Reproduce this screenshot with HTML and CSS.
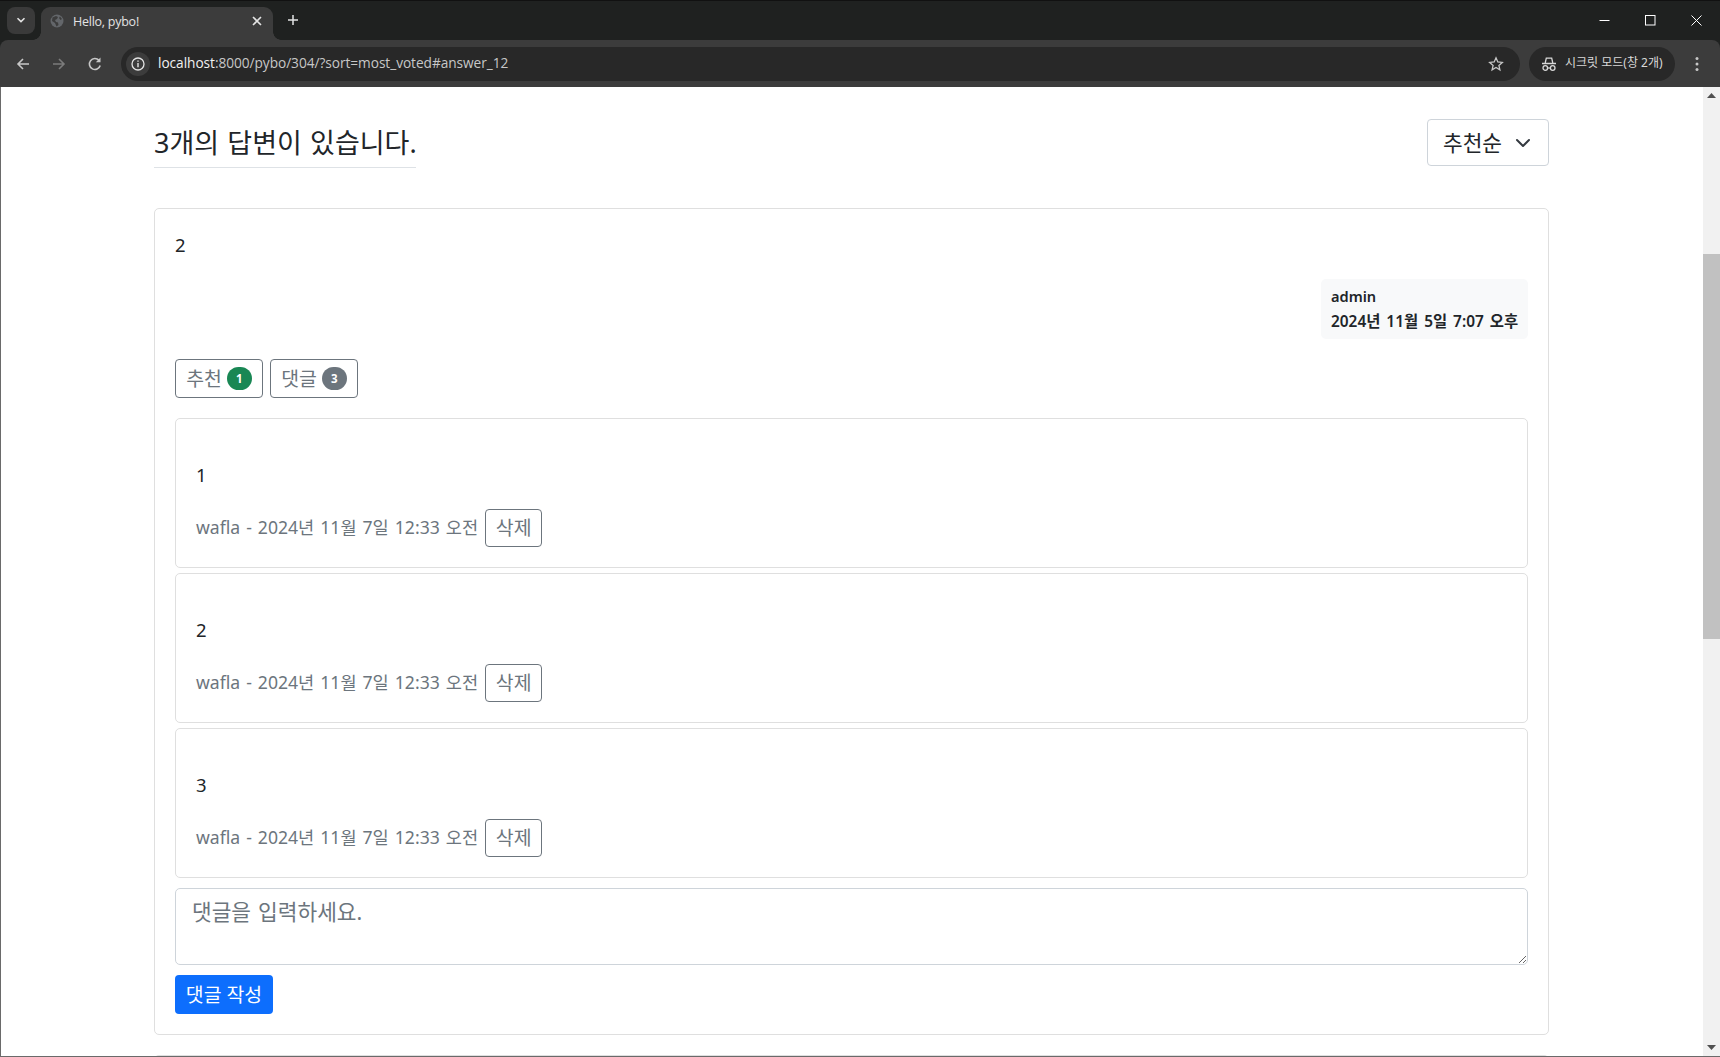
FILE: index.html
```html
<!DOCTYPE html>
<html lang="ko">
<head>
<meta charset="utf-8">
<title>Hello, pybo!</title>
<link rel="stylesheet" href="styles.css">
</head>
<body>
<div class="window">
  <div class="tabstrip">
    <div class="tab-menu"><svg width="10" height="6" viewBox="0 0 10 6"><path d="M1.5 1.2 5 4.6l3.5-3.4" fill="none" stroke="#e3e3e3" stroke-width="1.6"/></svg></div>
    <div class="tab">
      <svg class="favicon" width="14" height="14" viewBox="0 0 14 14"><circle cx="7" cy="7" r="6.5" fill="#63666a"/><path d="M2.5 3.5 6 2l2 1-1 2-2 1 1 2 2 .5.5 2.5-2 1.5L5 9 2 7zM10 2.5l2 2.5-1.500 1-1.500-2z" fill="#3c3c3c"/></svg>
      <span class="tab-title">Hello, pybo!</span>
      <svg class="tab-close" width="10" height="10" viewBox="0 0 10 10"><path d="M1 1l8 8M9 1l-8 8" stroke="#e3e3e3" stroke-width="1.600"/></svg>
    </div>
    <svg class="new-tab" width="12" height="12" viewBox="0 0 12 12"><path d="M6 1v10M1 6h10" stroke="#e3e3e3" stroke-width="1.500"/></svg>
    <div class="win-controls">
      <svg width="11" height="11" viewBox="0 0 11 11"><path d="M.5 5.500h10" stroke="#fff"/></svg>
      <svg width="11" height="11" viewBox="0 0 11 11"><rect x=".5" y=".5" width="9.500" height="9.500" fill="none" stroke="#fff"/></svg>
      <svg width="11" height="11" viewBox="0 0 11 11"><path d="M.5.5l10 10M10.500.5l-10 10" stroke="#fff"/></svg>
    </div>
  </div>
  <div class="toolbar">
    <svg class="nav" width="16" height="16" viewBox="0 0 16 16"><path d="M14 8H3M8 3 3 8l5 5" fill="none" stroke="#c7c7c7" stroke-width="1.600"/></svg>
    <svg class="nav" width="16" height="16" viewBox="0 0 16 16"><path d="M2 8h11M8 3l5 5-5 5" fill="none" stroke="#7b7b7b" stroke-width="1.600"/></svg>
    <svg class="nav" width="16" height="16" viewBox="0 0 16 16"><path d="M13.200 9.500A5.500 5.500 0 1 1 12 4.300" fill="none" stroke="#c7c7c7" stroke-width="1.600"/><path d="M13.500 1.500v4.700H8.800z" fill="#c7c7c7"/></svg>
    <div class="omnibox">
      <span class="site-info"><svg width="14" height="14" viewBox="0 0 14 14"><circle cx="7" cy="7" r="6" fill="none" stroke="#e3e3e3" stroke-width="1.300"/><path d="M7 6v4.200M7 3.600v1.200" stroke="#e3e3e3" stroke-width="1.400"/></svg></span>
      <span class="url"><span class="url-host">localhost</span>:8000/pybo/304/?sort=most_voted#answer_12</span>
      <svg class="star" width="16" height="16" viewBox="0 0 16 16"><path d="M8 1.800l1.800 4.200 4.500.4-3.400 3 1 4.400L8 11.500l-3.900 2.300 1-4.400-3.400-3 4.500-.4z" fill="none" stroke="#c7c7c7" stroke-width="1.300"/></svg>
    </div>
    <div class="incognito">
      <svg width="16" height="16" viewBox="0 0 16 16"><path d="M4.200 7 5.300 2.200h5.400L11.800 7" fill="none" stroke="#d8d8d8" stroke-width="1.300"/><path d="M1 7.500h14" stroke="#d8d8d8" stroke-width="1.500"/><circle cx="4.300" cy="12" r="2.300" fill="none" stroke="#d8d8d8" stroke-width="1.300"/><circle cx="11.700" cy="12" r="2.300" fill="none" stroke="#d8d8d8" stroke-width="1.300"/><path d="M6.600 12h2.800" stroke="#d8d8d8" stroke-width="1.200"/></svg>
      <span>시크릿 모드(창 2개)</span>
    </div>
    <svg class="kebab" width="4" height="16" viewBox="0 0 4 16"><circle cx="2" cy="2.500" r="1.500" fill="#c7c7c7"/><circle cx="2" cy="8" r="1.500" fill="#c7c7c7"/><circle cx="2" cy="13.500" r="1.500" fill="#c7c7c7"/></svg>
  </div>
  <div class="viewport">
    <main class="page">
      <div class="answers-head">
        <h4 class="answers-title">3개의 답변이 있습니다.</h4>
        <div class="sort-select">추천순<svg width="16" height="16" viewBox="0 0 16 16"><path d="M2 5l6 6 6-6" fill="none" stroke="#343a40" stroke-width="2" stroke-linecap="round" stroke-linejoin="round"/></svg></div>
      </div>
      <section class="card">
        <div class="answer-text">2</div>
        <div class="author-row">
          <div class="author-badge">
            <div class="author-name">admin</div>
            <div class="author-date">2024년 11월 5일 7:07 오후</div>
          </div>
        </div>
        <div class="actions">
          <a class="btn btn-outline">추천 <span class="badge badge-green">1</span></a>
          <a class="btn btn-outline">댓글 <span class="badge badge-grey">3</span></a>
        </div>
        <div class="comment">
          <div class="comment-text">1</div>
          <div class="comment-meta"><span class="meta-label">wafla - 2024년 11월 7일 12:33 오전</span><a class="btn btn-outline btn-del">삭제</a></div>
        </div>
        <div class="comment">
          <div class="comment-text">2</div>
          <div class="comment-meta"><span class="meta-label">wafla - 2024년 11월 7일 12:33 오전</span><a class="btn btn-outline btn-del">삭제</a></div>
        </div>
        <div class="comment">
          <div class="comment-text">3</div>
          <div class="comment-meta"><span class="meta-label">wafla - 2024년 11월 7일 12:33 오전</span><a class="btn btn-outline btn-del">삭제</a></div>
        </div>
        <textarea class="comment-input" placeholder="댓글을 입력하세요."></textarea>
        <a class="btn btn-primary">댓글 작성</a>
      </section>
      <div class="next-card"></div>
    </main>
    <div class="scrollbar">
      <svg width="9" height="5" viewBox="0 0 9 5" class="sb-up"><path d="M4.500 0 9 5H0z" fill="#505050"/></svg>
      <div class="sb-track"><div class="sb-thumb"></div></div>
      <svg width="9" height="5" viewBox="0 0 9 5" class="sb-down"><path d="M0 0h9L4.500 5z" fill="#505050"/></svg>
    </div>
  </div>
</div>
</body>
</html>
```
FILE: styles.css
```css
* { box-sizing: border-box; }
html, body { margin: 0; height: 100%; overflow: hidden; }
body { font-family: "Noto Sans", "Noto Sans CJK KR", sans-serif; color: #212529; background: #fff; }
.window { height: 1057px; display: flex; flex-direction: column; overflow: hidden; background: #1f2120; }

.tabstrip { height: 40px; flex: none; background: #1f2120; display: flex; align-items: flex-start; padding: 6px 0 0 7px; border-top: 1px solid #111; }
.tab-menu { width: 28px; height: 27px; background: #3a3a3a; border-radius: 8px; display: flex; align-items: center; justify-content: center; flex: none; padding-bottom: 1px; }
.tab { position: relative; width: 232px; height: 33px; margin-left: 6px; background: #3c3c3c; border-radius: 9px 9px 0 0; display: flex; align-items: center; padding: 0 11px 6px 9px; flex: none; }
.tab::before, .tab::after { content: ""; position: absolute; bottom: 0; width: 8px; height: 8px; }
.tab::before { left: -8px; background: radial-gradient(circle at 0 0, transparent 7.500px, #3c3c3c 8px); }
.tab::after { right: -8px; background: radial-gradient(circle at 100% 0, transparent 7.500px, #3c3c3c 8px); }
.favicon { flex: none; }
.tab-title { margin: 2px 0 0 9px; font: 12.500px/16px "Open Sans", sans-serif; color: #e3e3e3; flex: 1; letter-spacing: -.25px; }
.tab-close { flex: none; }
.new-tab { margin: 7px 0 0 14px; flex: none; }
.win-controls { margin-left: auto; margin-top: 8px; display: flex; gap: 35px; padding-right: 18px; }

.toolbar { height: 47px; flex: none; background: #3c3c3c; display: flex; align-items: center; padding: 0 0 0 15px; border-radius: 8px 8px 0 0; }
.nav { flex: none; margin-right: 20px; }
.omnibox { width: 1399px; height: 34px; margin-left: -2px; background: #282828; border-radius: 17px; display: flex; align-items: center; padding: 0 16px 0 5px; flex: none; }
.site-info { width: 24px; height: 24px; border-radius: 50%; background: #3c3c3c; display: flex; align-items: center; justify-content: center; flex: none; }
.url { margin: -2px 0 0 8px; font: 13.700px/18px "Open Sans", sans-serif; color: #c7c7c7; letter-spacing: -.05px; flex: 1; }
.url-host { color: #f1f1f1; }
.star { flex: none; }
.incognito { width: 146px; height: 34px; margin-left: 9px; background: #282828; border-radius: 17px; display: flex; align-items: center; gap: 8px; padding-left: 12px; color: #d8d8d8; font-size: 12px; flex: none; white-space: nowrap; }
.incognito span { margin-top: -3px; }
.kebab { margin-left: 20px; flex: none; }

.viewport { flex: 1; min-height: 0; display: flex; background: #fff; border-left: 1px solid #6a6a6a; border-bottom: 1px solid #6a6a6a; }
.page { flex: 1; min-width: 0; padding: 32px 0 0 153px; overflow: hidden; }

.answers-head { width: 1395px; display: flex; justify-content: space-between; align-items: flex-start; }
.answers-title { margin: 0; font-size: 27px; font-weight: 400; line-height: 32px; height: 49px; padding-top: 8px; border-bottom: 1px solid #dee2e6; width: 262px; white-space: nowrap; word-spacing: 1.200px; }
.sort-select { width: 122px; height: 47px; border: 1px solid #ced4da; border-radius: 4px; font-size: 21.400px; line-height: 45px; padding-left: 15px; display: flex; align-items: center; gap: 13px; }

.card { width: 1395px; height: 827px; margin-top: 40px; border: 1px solid #dfdfdf; border-radius: 5px; padding: 20px; display: flex; flex-direction: column; align-items: flex-start; }
.answer-text { font-size: 18.500px; line-height: 26px; height: 50px; padding-top: 3px; }
.author-row { align-self: stretch; display: flex; justify-content: flex-end; }
.author-badge { width: 207px; height: 60px; background: #f8f9fa; border-radius: 5px; padding: 5px 10px; font-size: 15.400px; line-height: 25px; font-weight: 600; white-space: nowrap; }
.author-name { font-size: 14.600px; }
.author-date { word-spacing: 2px; }
.actions { display: flex; gap: 7px; margin-top: 20px; }

.btn { display: inline-flex; align-items: center; justify-content: center; gap: 5px; height: 39px; border-radius: 4px; font-size: 19.400px; white-space: nowrap; padding-bottom: 3px; }
.btn-outline { width: 88px; border: 1px solid #6c757d; color: #6c757d; }
.btn-primary { width: 98px; margin-top: 10px; background: #0d6efd; color: #fff; }
.btn-del { width: 57px; height: 38px; margin-left: 7px; margin-top: 1px; }
.badge { width: 25px; height: 23px; margin-top: 3px; border-radius: 12px; color: #fff; font-size: 11.500px; font-weight: 700; display: inline-flex; align-items: center; justify-content: center; }
.badge-green { background: #198754; }
.badge-grey { background: #6c757d; }

.comment { align-self: stretch; height: 150px; border: 1px solid #dfdfdf; border-radius: 5px; padding: 40px 20px 0; margin-bottom: 5px; }
.actions + .comment { margin-top: 20px; }
.comment-text { font-size: 18.500px; line-height: 26px; height: 49px; padding-top: 3px; }
.comment-meta { display: flex; align-items: center; font-size: 17.600px; color: #6c757d; height: 38px; white-space: nowrap; }
.meta-label { word-spacing: 1.420px; margin-top: -2px; }
.comment-input { align-self: stretch; height: 77px; margin-top: 5px; flex: none; border: 1px solid #ced4da; border-radius: 5px; padding: 8px 16px; font: 400 21.400px/29px "Noto Sans", "Noto Sans CJK KR", sans-serif; color: #212529; outline: none; }
.comment-input::placeholder { color: #6c757d; opacity: 1; word-spacing: 1.500px; }
.next-card { width: 1395px; height: 30px; margin-top: 20px; border-top: 1px solid #dfdfdf; border-radius: 5px 5px 0 0; }

.scrollbar { width: 17px; flex: none; background: #f1f1f1; display: flex; flex-direction: column; align-items: center; }
.sb-up { flex: none; margin: 6px 0; }
.sb-down { flex: none; margin: 6px 0; }
.sb-track { flex: 1; align-self: stretch; }
.sb-thumb { height: 385px; margin-top: 150px; background: #c1c1c1; }
```
